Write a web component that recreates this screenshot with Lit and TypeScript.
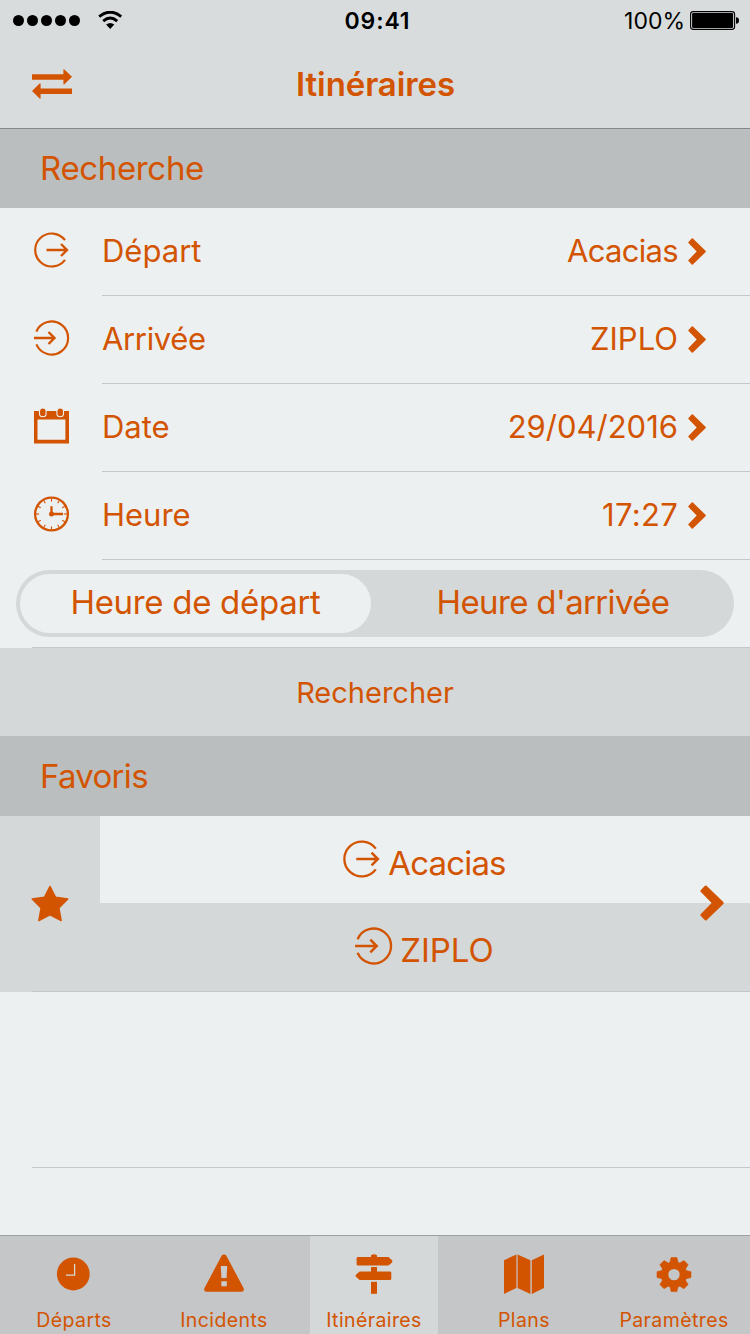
import { LitElement, html, css, svg, nothing } from "lit";
import { customElement, property } from "lit/decorators.js";

const ring = (path: string, arrow: string) => svg`
  <path d=${path} fill="none" stroke="currentColor" stroke-width="2.2"/>
  <path d=${arrow} fill="none" stroke="currentColor" stroke-width="2.4"/>`;

const ticks = Array.from({ length: 12 }, (_, i) => i * 30);

const shapes: Record<string, { box: string; body: unknown }> = {
  depart: {
    box: "0 0 36 36",
    body: ring("M32 8.2A16.5 16.5 0 1 0 32 27.8", "M13.5 18H34M28 12l6 6l-6 6"),
  },
  arrive: {
    box: "0 0 36 36",
    body: ring("M3.4 11.6A16.5 16.5 0 1 1 3.4 24.4", "M1 18H21.5M15.5 12l6 6l-6 6"),
  },
  calendar: {
    box: "0 0 36 36",
    body: svg`
      <path fill-rule="evenodd" fill="currentColor" d="M1 3H36V35.4H1ZM4.5 11.6V31.8H32.4V11.6Z"/>
      <g fill="currentColor" stroke="#ecf0f1" stroke-width="1.1">
        <rect x="6.5" y="0" width="6.6" height="8.8" rx="3.3"/>
        <rect x="23.9" y="0" width="6.6" height="8.8" rx="3.3"/>
      </g>`,
  },
  clock: {
    box: "0 0 36 36",
    body: svg`
      <circle cx="18.5" cy="18" r="16.4" fill="none" stroke="currentColor" stroke-width="2.3"/>
      ${ticks.map((a) => svg`<path d="M18.5 2.5V5.6" stroke="currentColor" stroke-width="1.1" transform="rotate(${a} 18.5 18)"/>`)}
      <path d="M18.5 18V10.3M18.5 18H30" fill="none" stroke="currentColor" stroke-width="2.3"/>
      <circle cx="18.5" cy="18" r="2.5" fill="currentColor"/>`,
  },
  chevron: {
    box: "0 0 18 27",
    body: svg`<path fill="currentColor" d="M0.5 3.9L3.7 0.6Q4.3 0 4.9 0.6L17.5 12.8Q18.1 13.5 17.5 14.2L4.9 26.4Q4.3 27 3.7 26.4L0.5 23.1Q-0.1 22.5 0.5 21.9L8.7 13.5L0.5 5.1Q-0.1 4.5 0.5 3.9Z"/>`,
  },
  swap: {
    box: "0 0 40 30",
    body: svg`<path fill="currentColor" d="M0 5.2H31.4V0.6Q31.6-0.2 32.4 0.4L40 7.8L32.4 15.2Q31.6 15.8 31.4 15V10.7H0ZM40 19.4H8.6V14.8Q8.4 14 7.6 14.6L0 22L7.6 29.4Q8.4 30 8.6 29.2V24.9H40Z"/>`,
  },
  star: {
    box: "0 0 38 37",
    body: svg`<path fill="currentColor" stroke="currentColor" stroke-width="1.4" stroke-linejoin="round" d="M19 1.4L24.6 12.3L36.8 14L27.9 22.9L30.2 35.6L19 29.9L7.8 35.6L10.1 22.9L1.2 14L13.4 12.3Z"/>`,
  },
  departs: {
    box: "0 0 40 40",
    body: svg`<circle cx="19.3" cy="20" r="16.4" fill="currentColor"/>
      <path d="M20.6 10V21.1H12" fill="none" stroke="#d5d7d8" stroke-width="1.3"/>`,
  },
  incidents: {
    box: "0 0 40 40",
    body: svg`<path fill="currentColor" d="M17.6 1.8Q20 -1.2 22.4 1.8L39.5 34Q41 37.6 37.2 37.8H2.8Q-1 37.6 0.5 34Z"/>
      <path fill="#c9cbcc" d="M16.8 12H23.2L22.6 24H17.4ZM17.3 27.2H22.8V32.2H17.3Z"/>`,
  },
  sign: {
    box: "0 0 40 40",
    body: svg`<g fill="currentColor">
      <path d="M17 3V1.2Q20-0.9 23 1.2V3H34.5L37.8 6Q39.3 7.3 37.8 8.7L34.5 11.6H4Q2.6 11.6 2.6 10.2V4.4Q2.6 3 4 3Z"/>
      <path d="M17 13H23V17.5H35.9Q37.3 17.5 37.3 18.9V24.7Q37.3 26.1 35.9 26.1H5.6L2.2 23.1Q0.8 21.8 2.2 20.5L5.6 17.5H17Z"/>
      <path d="M17 27.8H23V39.8H17Z"/></g>`,
  },
  map: {
    box: "0 0 40 40",
    body: svg`<path fill="currentColor" d="M0 6.2L12.4 0.4V34.1L0 39.9ZM13.6 0.4L26.4 6.2V39.9L13.6 34.1ZM27.8 6.2L40 0.4V34.1L27.8 39.9Z"/>`,
  },
  gear: {
    box: "0 0 40 40",
    body: svg`<g fill="currentColor" transform="translate(20 20.6)">
      ${[0, 45, 90, 135, 180, 225, 270, 315].map((a) => svg`<path d="M-4.4 -11L-2.9 -17H2.9L4.4 -11Z" stroke="currentColor" stroke-width="0.6" transform="rotate(${a})"/>`)}
      <circle r="9.4" fill="none" stroke="currentColor" stroke-width="7.4"/></g>`,
  },
};

@customElement("ui-icon")
class UiIcon extends LitElement {
  @property() name = "";
  static styles = css`
    :host { display: block; flex: none; }
    .glyph { display: block; width: 100%; height: 100%; overflow: visible; }
  `;
  render() {
    const s = shapes[this.name];
    return s ? html`<svg class="glyph" viewBox=${s.box}>${s.body}</svg>` : nothing;
  }
}

const rows = [
  { icon: "depart", label: "Départ", value: "Acacias", valueClass: "tight" },
  { icon: "arrive", label: "Arrivée", value: "ZIPLO", labelClass: "snug" },
  { icon: "calendar", label: "Date", value: "29/04/2016" },
  { icon: "clock", label: "Heure", value: "17:27", valueClass: "loose" },
];

const tabs = [
  { icon: "departs", label: "Départs" },
  { icon: "incidents", label: "Incidents" },
  { icon: "sign", label: "Itinéraires", active: true },
  { icon: "map", label: "Plans" },
  { icon: "gear", label: "Paramètres" },
];

@customElement("app-root")
class AppRoot extends LitElement {
  static styles = css`
    :host {
      display: flex; flex-direction: column; width: 750px; height: 1334px;
      background: #ecf0f1; color: #d35400; overflow: hidden;
      font-family: Inter, "Liberation Sans", sans-serif;
      white-space: nowrap;
    }
    * { box-sizing: border-box; }
    .snug { letter-spacing: -0.35px; }
    .tight { letter-spacing: -0.7px; }
    .loose { letter-spacing: 0.3px; }
    .top { height: 129px; background: #d8dcdd; border-bottom: 1px solid #85888a; flex: none; }
    .status {
      height: 40px; display: grid; grid-template-columns: 1fr auto 1fr;
      align-items: center; color: #000; font-size: 23px; line-height: 40px; padding: 1px 11px 0 13px;
    }
    .signal { display: flex; align-items: center; gap: 3px; margin-top: -1px; }
    .dot { width: 11px; height: 11px; border-radius: 50%; background: #000; }
    .wifi { width: 25px; height: 19px; margin-left: 15px; }
    .time { font-weight: 600; letter-spacing: 0.9px; padding-left: 3px; }
    .power { display: flex; justify-content: flex-end; align-items: center; gap: 5px; }
    .battery { width: 49px; height: 19px; margin-top: -1px; }
    .nav { height: 88px; display: grid; grid-template-columns: 150px 1fr 150px; align-items: center; }
    .swap { width: 40px; height: 30px; margin-left: 32px; }
    .title { text-align: center; font-size: 33px; font-weight: 600; line-height: 88px; letter-spacing: -0.1px; padding-left: 1px; }
    .section {
      height: 80px; padding-left: 40px; background: #babebf; font-size: 33px;
      line-height: 80px; flex: none;
    }
    .section.first { height: 79px; line-height: 79px; }
    .row { height: 88px; display: flex; padding-left: 33px; flex: none; }
    .row-icon { width: 36px; height: 36px; margin: 24px 33px 0 0; }
    .row-body {
      flex: 1; border-bottom: 1px solid #c5c8ca; display: flex; align-items: center;
      font-size: 31px; line-height: 85px; padding-right: 44px;
    }
    .row-label, .row-value { height: 87px; }
    .row-label { flex: 1; }
    .chevron { width: 18px; height: 27px; margin-left: 10px; }
    .segment-row { height: 87px; padding: 10px 16px; flex: none; }
    .rule { height: 1px; margin-left: 32px; background: #c5c8ca; flex: none; }
    .segments {
      height: 67px; border-radius: 34px; background: #d4d8d9; padding: 4px;
      display: grid; grid-template-columns: 351px 1fr; font-size: 33px; line-height: 57px; text-align: center;
    }
    .selected { background: #ecf0f1; border-radius: 30px; height: 59px; letter-spacing: -0.3px; }
    .other { letter-spacing: -0.65px; padding-left: 5px; }
    .search { height: 88px; background: #d4d8d9; text-align: center; font-size: 29px; line-height: 90px; flex: none; }
    .favorite { height: 176px; display: grid; grid-template-columns: 100px 1fr; background: #d4d8d9; position: relative; flex: none; }
    .star-cell { display: flex; align-items: center; justify-content: center; padding: 0 1px 2px 0; }
    .star { width: 38px; height: 37px; }
    .stops { display: grid; grid-template-rows: 87px 88px 1px; }
    .stop { display: flex; justify-content: center; align-items: center; gap: 8px; font-size: 33px; line-height: 87px; padding-right: 2px; }
    .stop.from { background: #ecf0f1; }
    .stop-icon { width: 38px; height: 38px; margin-bottom: 2px; }
    .from .stop-icon { margin-bottom: 1px; }
    .stop-name { padding-top: 6px; }
    .from .stop-name { padding-top: 8px; letter-spacing: -0.85px; }
    .fav-chevron { position: absolute; right: 26px; top: 69px; width: 24px; height: 36px; }
    .fav-rule { position: absolute; left: 32px; right: 0; bottom: 0; height: 1px; background: #c2c6c8; }
    .empty { height: 176px; display: flex; flex-direction: column; justify-content: flex-end; flex: none; }
    .spacer { flex: 1; }
    .tabs {
      height: 99px; border-top: 1px solid #9ea2a3; background: #c5c6c8; flex: none;
      display: grid; grid-template-columns: repeat(5, 150px); margin-left: -1px;
    }
    .tab {
      width: 128px; justify-self: center; display: flex; flex-direction: column;
      align-items: center; padding-top: 18px; font-size: 19.5px; line-height: 24px; letter-spacing: 0.4px;
    }
    .tab.active { background: #d4d8d9; }
    .tab-icon { width: 40px; height: 40px; }
    .tab-label { margin-top: 14px; }
  `;

  render() {
    return html`
      <header class="top">
        <div class="status">
          <div class="signal">
            ${[1, 2, 3, 4, 5].map(() => html`<span class="dot"></span>`)}
            <svg class="wifi" viewBox="0 0 25 19">
              <g fill="none" stroke="#000" stroke-width="2.9">
                <path d="M1.2 5.6Q12.2-3.3 23.2 5.6"/>
                <path d="M5.2 10.1Q12.2 4.1 19.2 10.1"/>
              </g>
              <path d="M8.1 13.6Q12.2 10.2 16.3 13.6L12.2 17.9Z"/>
            </svg>
          </div>
          <span class="time">09:41</span>
          <div class="power">
            <span>100%</span>
            <svg class="battery" viewBox="0 0 49 19">
              <rect x="0.6" y="0.6" width="44" height="17.8" rx="2.6" fill="none" stroke="#000" stroke-width="1.1"/>
              <rect x="2.1" y="2.1" width="41" height="14.8" rx="1.2"/>
              <path d="M46 6.2Q49 6.2 49 9.5Q49 12.8 46 12.8Z"/>
            </svg>
          </div>
        </div>
        <div class="nav">
          <ui-icon class="swap" name="swap"></ui-icon>
          <span class="title">Itinéraires</span>
        </div>
      </header>

      <div class="section first snug">Recherche</div>
      ${rows.map((r) => html`
        <div class="row">
          <ui-icon class="row-icon" name=${r.icon}></ui-icon>
          <div class="row-body">
            <span class="row-label ${r.labelClass ?? ""}">${r.label}</span>
            <span class="row-value ${r.valueClass ?? ""}">${r.value}</span>
            <ui-icon class="chevron" name="chevron"></ui-icon>
          </div>
        </div>`)}
      <div class="segment-row">
        <div class="segments">
          <span class="selected">Heure de départ</span>
          <span class="other">Heure d'arrivée</span>
        </div>
      </div>
      <div class="rule"></div>
      <div class="search">Rechercher</div>

      <div class="section tight">Favoris</div>
      <div class="favorite">
        <div class="star-cell"><ui-icon class="star" name="star"></ui-icon></div>
        <div class="stops">
          <div class="stop from">
            <ui-icon class="stop-icon" name="depart"></ui-icon><span class="stop-name">Acacias</span>
          </div>
          <div class="stop">
            <ui-icon class="stop-icon" name="arrive"></ui-icon><span class="stop-name">ZIPLO</span>
          </div>
        </div>
        <ui-icon class="fav-chevron" name="chevron"></ui-icon>
        <div class="fav-rule"></div>
      </div>
      <div class="empty"><div class="rule"></div></div>
      <div class="spacer"></div>

      <nav class="tabs">
        ${tabs.map((t) => html`
          <div class="tab ${t.active ? "active" : ""}">
            <ui-icon class="tab-icon" name=${t.icon}></ui-icon>
            <span class="tab-label">${t.label}</span>
          </div>`)}
      </nav>
    `;
  }
}
